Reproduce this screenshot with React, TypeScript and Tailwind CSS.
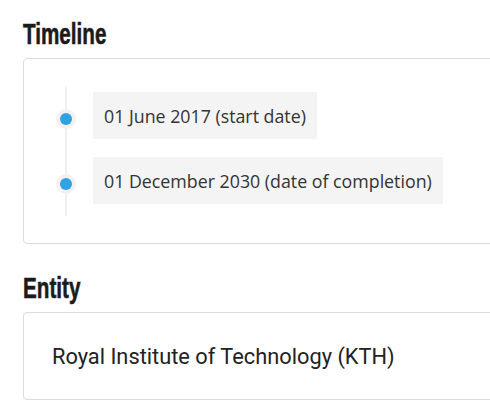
import React from 'react';

const events = [
  { id: 1, label: '01 June 2017 (start date)' },
  { id: 2, label: '01 December 2030 (date of completion)' },
];

// no condensed display face offline, so squeeze a bold one
const SectionTitle: React.FC<{ children: React.ReactNode }> = ({ children }) => (
  <h2 className="mb-[8px] text-[29.5px] leading-[32px] font-bold text-[#1b1b1b] font-['Liberation_Sans',sans-serif] [-webkit-text-stroke:0.6px_#1b1b1b] scale-x-[0.7] origin-left whitespace-nowrap">
    {children}
  </h2>
);

export default function App() {
  return (
    <div className="w-full min-h-[414px] overflow-hidden bg-white">
      <div className="ml-[23px] pt-[18px]">
        <SectionTitle>Timeline</SectionTitle>

        <div className="w-[520px] border border-[#dcdcdc] rounded-[4px] pt-[33px] pb-[39px]">
          <div className="relative">
            <div className="absolute left-[41px] top-[-5px] h-[129px] w-[2px] bg-[#efefef]" />
            <ul className="relative flex flex-col gap-[18px]">
              {events.map((event) => (
                <li key={event.id} className="flex items-start">
                  <div className="ml-[32px] mt-[17px] w-[20px] h-[20px] rounded-full bg-[#f3f1f1] flex items-center justify-center shrink-0">
                    <div className="w-[12px] h-[12px] rounded-full bg-[#2fa2e2]" />
                  </div>
                  <div className="ml-[17px] bg-[#f4f4f4] px-[11px] pt-[13px] pb-[11px] text-[17.8px] leading-[23px] text-[#333333] font-['Open_Sans',sans-serif]">
                    {event.label}
                  </div>
                </li>
              ))}
            </ul>
          </div>
        </div>

        <div className="mt-[28px]">
          <SectionTitle>Entity</SectionTitle>
        </div>

        <div className="w-[520px] border border-[#dcdcdc] rounded-[4px] pl-[28px] pt-[30px] pb-[28px]">
          <p className="text-[21.8px] leading-[28px] text-[#222222] font-['Roboto',sans-serif]">
            Royal Institute of Technology (KTH)
          </p>
        </div>
      </div>
    </div>
  );
}
